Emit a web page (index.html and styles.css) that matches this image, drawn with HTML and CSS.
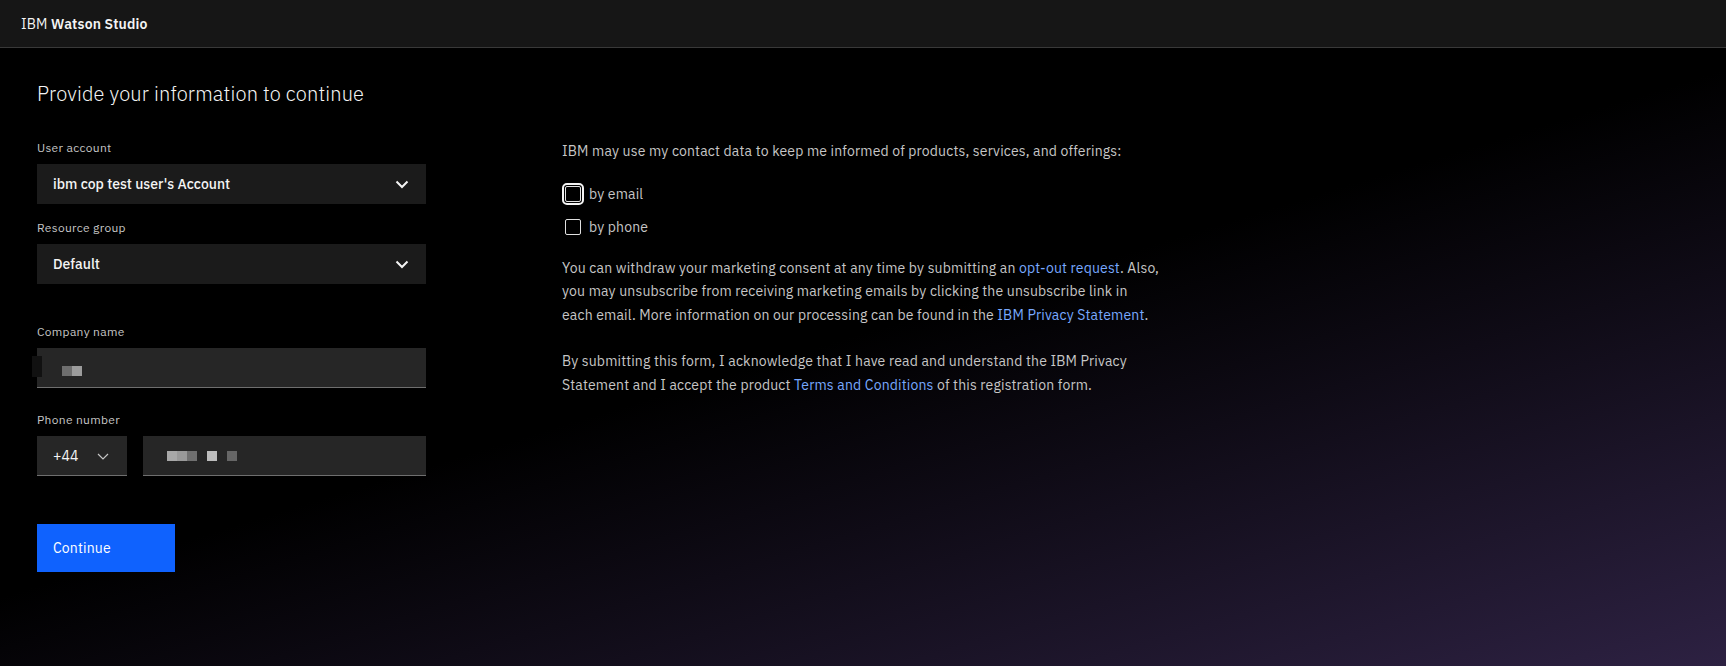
FILE: index.html
```html
<!DOCTYPE html>
<html lang="en">
<head>
<meta charset="utf-8">
<title>IBM Watson Studio</title>
<link rel="stylesheet" href="styles.css">
</head>
<body>
<header class="topbar">
  <span class="brand">IBM <strong>Watson Studio</strong></span>
</header>
<main class="page">
  <h1 class="title">Provide your information to continue</h1>
  <div class="columns">
    <form class="form-col">
      <div class="group">
        <div class="field-label">User account</div>
        <div class="dropdown"><span>ibm cop test user's Account</span>
          <svg class="chev" width="16" height="16" viewBox="0 0 16 16"><polyline points="2.5,5.5 8,11 13.5,5.5" fill="none" stroke="#f4f4f4" stroke-width="2"/></svg>
        </div>
      </div>
      <div class="group">
        <div class="field-label">Resource group</div>
        <div class="dropdown"><span>Default</span>
          <svg class="chev" width="16" height="16" viewBox="0 0 16 16"><polyline points="2.5,5.5 8,11 13.5,5.5" fill="none" stroke="#f4f4f4" stroke-width="2"/></svg>
        </div>
      </div>
      <div class="group group-wide">
        <div class="field-label">Company name</div>
        <div class="text-input company">
          <span class="artifact"></span>
          <span class="redacted redacted-low"><i class="px p1"></i><i class="px p2"></i></span>
        </div>
      </div>
      <div class="group group-mid">
        <div class="field-label">Phone number</div>
        <div class="phone-row">
          <div class="country"><span>+44</span>
            <svg width="16" height="16" viewBox="0 0 16 16"><polyline points="3,6 8,11 13,6" fill="none" stroke="#c6c6c6" stroke-width="1.2"/></svg>
          </div>
          <div class="text-input phone">
            <span class="redacted"><i class="px p3"></i><i class="px p4"></i><i class="px p5"></i><i class="px gap"></i><i class="px p6"></i><i class="px gap"></i><i class="px p7"></i></span>
          </div>
        </div>
      </div>
      <button type="button" class="btn-primary">Continue</button>
    </form>
    <section class="consent-col">
      <p class="intro">IBM may use my contact data to keep me informed of products, services, and offerings:</p>
      <div class="checks">
        <label class="check"><span class="box focused"></span>by email</label>
        <label class="check"><span class="box"></span>by phone</label>
      </div>
      <p class="para">You can withdraw your marketing consent at any time by submitting an <a href="#">opt-out request</a>. Also,<br>you may unsubscribe from receiving marketing emails by clicking the unsubscribe link in<br>each email. More information on our processing can be found in the <a href="#">IBM Privacy Statement</a>.</p>
      <p class="para para2">By submitting this form, I acknowledge that I have read and understand the IBM Privacy<br>Statement and I accept the product <a href="#">Terms and Conditions</a> of this registration form.</p>
    </section>
  </div>
</main>
</body>
</html>
```

FILE: styles.css
```css
* { box-sizing: border-box; }
html, body { margin: 0; }
body {
  min-height: 100vh;
  font-family: "IBM Plex Sans", "Noto Sans", sans-serif;
  color: #f4f4f4;
  background: linear-gradient(163deg, #000 50%, #2d2142 100%);
}
.topbar {
  height: 48px;
  background: #161616;
  border-bottom: 1px solid #393939;
  display: flex;
  align-items: center;
  padding-left: 21px;
  font-size: 14px;
  letter-spacing: .16px;
  color: #f4f4f4;
}
.brand strong { font-weight: 600; }
.page { padding: 32px 37px 0; }
.title { margin: 0; font-size: 20px; font-weight: 300; line-height: 28px; letter-spacing: .16px; }
.columns { display: flex; margin-top: 32px; }
.form-col { width: 389px; flex: none; }
.group + .group { margin-top: 16px; }
.group.group-wide { margin-top: 40px; }
.group.group-mid { margin-top: 24px; }
.field-label { font-size: 12px; line-height: 16px; color: #c6c6c6; letter-spacing: .32px; margin-bottom: 8px; }
.dropdown {
  height: 40px; background: #1b1b1b; display: flex; align-items: center; justify-content: space-between;
  padding: 0 16px; font-size: 14px; font-weight: 500;
}
.text-input { position: relative; height: 40px; background: #262626; border-bottom: 1px solid #6f6f6f; display: flex; align-items: center; padding: 0 16px; }
.artifact { position: absolute; left: -5px; top: 8px; width: 10px; height: 21px; background: #111; }
.redacted { display: flex; margin-left: 8px; }
.redacted-low { margin-left: 9px; margin-top: 7px; }
.px { display: block; width: 10px; height: 10px; }
.p1 { background: #6e6e6e; }
.p2 { background: #9c9c9c; }
.p3 { background: #a8a8a8; }
.p4 { background: #999; }
.p5 { background: #707070; }
.p6 { background: #bdbdbd; }
.p7 { background: #666; }
.gap { background: transparent; }
.phone-row { display: flex; gap: 16px; }
.country { width: 90px; flex: none; height: 40px; background: #262626; border-bottom: 1px solid #6f6f6f; display: flex; align-items: center; justify-content: space-between; padding: 0 16px; font-size: 14px; letter-spacing: .16px; }
.phone { flex: 1; padding-left: 16px; }
.btn-primary {
  margin-top: 48px; height: 48px; width: 138px; border: 0; background: #0f62fe; color: #fff;
  font-family: inherit; font-size: 14px; letter-spacing: .16px; text-align: left; padding: 0 16px; display: block;
}
.consent-col { margin-left: 136px; font-size: 14px; letter-spacing: .16px; color: #c6c6c6; padding-top: 1px; }
.intro { margin: 0; line-height: 20px; }
.checks { margin-top: 21px; display: flex; flex-direction: column; gap: 9px; }
.check { display: flex; align-items: center; gap: 8px; height: 24px; }
.box { width: 16px; height: 16px; border: 1px solid #e0e0e0; border-radius: 2px; margin-left: 3px; }
.box.focused { outline: 2px solid #f4f4f4; outline-offset: 1px; }
.para { margin: 18px 0 0; line-height: 23.33px; white-space: nowrap; }
.para2 { margin-top: 23.33px; }
.para a { color: #78a9ff; text-decoration: none; }
```
